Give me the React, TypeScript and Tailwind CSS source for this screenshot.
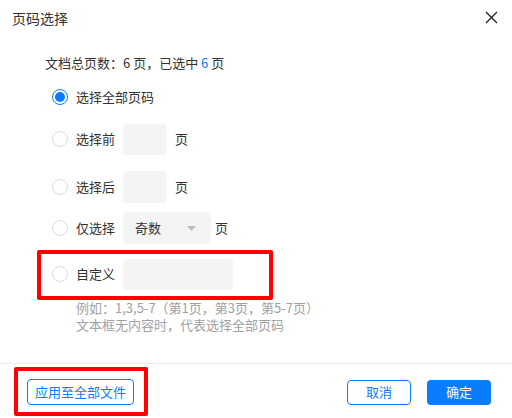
import React from "react";

const Radio = ({ checked = false }: { checked?: boolean }) =>
  checked ? (
    <span className="flex items-center justify-center w-4 h-4 rounded-full border-[1.5px] border-[#0a7cff] bg-white">
      <span className="w-[10px] h-[10px] rounded-full bg-[#0a7cff]" />
    </span>
  ) : (
    <span className="w-4 h-4 rounded-full border border-[#dcdce4] bg-white" />
  );

const App = () => {
  return (
    <div
      className="relative w-[512px] h-[418px] bg-white flex flex-col text-[#333] overflow-hidden"
      style={{ fontFamily: '"Noto Sans CJK SC", "Noto Sans", sans-serif' }}
    >
      {/* Header */}
      <div className="flex items-center justify-between h-9 pl-3 pr-[14px]">
        <span className="text-[14px]">页码选择</span>
        <svg width="13" height="13" viewBox="0 0 13 13" className="mt-[-2px]">
          <path d="M1 1 L12 12 M12 1 L1 12" stroke="#222" strokeWidth="1.4" />
        </svg>
      </div>

      {/* Body */}
      <div className="flex-1 flex flex-col pl-[45px] text-[13px]">
        <div className="mt-[17px] leading-5">
          文档总页数：6 页，已选中 <span className="text-[#0a7cff]">6</span> 页
        </div>

        <div className="pl-[7px] flex flex-col">
          <div className="mt-2 h-8 flex items-center gap-2">
            <Radio checked />
            <span>选择全部页码</span>
          </div>

          <div className="mt-[10px] h-8 flex items-center">
            <Radio />
            <span className="ml-2 w-[39px]">选择前</span>
            <div className="ml-2 w-11 h-[31px] rounded-[4px] bg-[#f4f4f5]" />
            <span className="ml-2">页</span>
          </div>

          <div className="mt-4 h-8 flex items-center">
            <Radio />
            <span className="ml-2 w-[39px]">选择后</span>
            <div className="ml-2 w-11 h-8 rounded-[4px] bg-[#f4f4f5]" />
            <span className="ml-2">页</span>
          </div>

          <div className="mt-[9px] h-8 flex items-center">
            <Radio />
            <span className="ml-2 w-[39px]">仅选择</span>
            <div className="ml-2 w-[88px] h-8 rounded-[4px] bg-[#f4f4f5] flex items-center justify-between pl-3 pr-[15px]">
              <span>奇数</span>
              <svg width="9" height="5" viewBox="0 0 9 5">
                <path d="M0 0 H9 L4.5 5 Z" fill="#bdbdc2" />
              </svg>
            </div>
            <span className="ml-1">页</span>
          </div>

          <div className="mt-[14px] h-8 flex items-center">
            <Radio />
            <span className="ml-2 w-[39px]">自定义</span>
            <div className="ml-2 w-[110px] h-[31px] rounded-[4px] bg-[#f4f4f5]" />
          </div>

          <div className="mt-[9px] ml-6 text-[#a0a0a6] leading-[17px]">
            <div>例如：1,3,5-7（第1页，第3页，第5-7页）</div>
            <div>文本框无内容时，代表选择全部页码</div>
          </div>
        </div>
      </div>

      {/* Footer */}
      <div className="h-[55px] border-t border-[#ececee] flex items-center justify-between pl-[27px] pr-[21px] pt-[2px] text-[13px]">
        <button className="w-[107px] h-[26px] rounded-[4px] border border-[#0a7cff] text-[#0a7cff]">
          应用至全部文件
        </button>
        <div className="flex gap-4">
          <button className="w-16 h-[25px] rounded-[4px] border border-[#0a7cff] text-[#0a7cff]">
            取消
          </button>
          <button className="w-16 h-[25px] rounded-[4px] bg-[#0a7cff] text-white">
            确定
          </button>
        </div>
      </div>

      {/* Annotation boxes */}
      <div className="absolute left-[37px] top-[250px] w-[236px] h-[50px] border-4 border-[#ff0000] rounded-[2px] pointer-events-none" />
      <div className="absolute left-[14px] top-[367px] w-[134px] h-[49px] border-4 border-[#ff0000] rounded-[2px] pointer-events-none" />
    </div>
  );
};

export default App;
